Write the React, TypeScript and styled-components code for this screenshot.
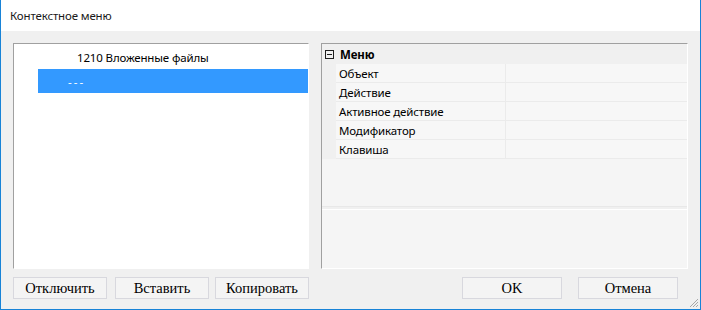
import React from "react";
import styled, { createGlobalStyle } from "styled-components";

const Global = createGlobalStyle`
  html, body { margin: 0; padding: 0; background: #f0f0f0; }
  * { box-sizing: border-box; }
`;

const Window = styled.div`
  width: 701px;
  height: 310px;
  display: flex;
  flex-direction: column;
  border: 1px solid #1883d7;
  border-top: none;
  background: #f0f0f0;
  position: relative;
  font-family: "Noto Sans", "Open Sans", sans-serif;
  font-size: 11.5px;
  letter-spacing: -0.15px;
  color: #000;
`;

const TitleBar = styled.div`
  height: 31px;
  background: #fff;
  display: flex;
  align-items: center;
  padding-left: 9px;
  padding-bottom: 1px;
  color: #1a1a1a;
`;

const Body = styled.div`
  flex: 1;
  display: flex;
  flex-direction: column;
  padding: 12px 12px 0 12px;
`;

const Panels = styled.div`
  display: grid;
  grid-template-columns: 296px 367px;
  column-gap: 12px;
  height: 226px;
`;

const Sunken = styled.div`
  border-top: 1px solid #a0a0a0;
  border-left: 1px solid #a0a0a0;
  border-right: 1px solid #fff;
  border-bottom: 1px solid #fff;
`;

const Tree = styled(Sunken)`
  background: #fff;
  padding-top: 1px;
  display: flex;
  flex-direction: column;
`;

const TreeRow = styled.div<{ $indent: number; $text: number; $selected?: boolean }>`
  height: 24px;
  display: flex;
  align-items: center;
  margin-left: ${(p) => p.$indent}px;
  padding-left: ${(p) => p.$text}px;
  background: ${(p) => (p.$selected ? "#3399ff" : "transparent")};
  color: ${(p) => (p.$selected ? "#fff" : "#000")};
  letter-spacing: ${(p) => (p.$selected ? "2px" : "inherit")};
  white-space: nowrap;
`;

const PropGrid = styled(Sunken)`
  background: #f0f0f0;
  display: flex;
  flex-direction: column;
`;

const GridBody = styled.div`
  height: 163px;
  background: #f5f5f5;
  border-bottom: 1px solid #e8e8e8;
  display: flex;
  flex-direction: column;
`;

const CategoryRow = styled.div`
  height: 20px;
  display: flex;
  align-items: center;
  background: #f0f0f0;
  font-weight: 700;
  padding-left: 3px;
  gap: 6px;
`;

const Expander = styled.span`
  width: 9px;
  height: 9px;
  border: 1px solid #1e1e1e;
  position: relative;
  display: inline-block;
  &::after {
    content: "";
    position: absolute;
    left: 1px;
    right: 1px;
    top: 3px;
    height: 1px;
    background: #1e1e1e;
  }
`;

const PropRow = styled.div`
  height: 19px;
  display: grid;
  grid-template-columns: 14px 170px 1fr;
`;

const Margin = styled.div`
  background: #f0f0f0;
`;

const Cell = styled.div<{ $divider?: boolean }>`
  background: #f7f7f7;
  border-bottom: 1px solid #ebebeb;
  border-right: ${(p) => (p.$divider ? "1px solid #ebebeb" : "none")};
  display: flex;
  align-items: center;
  padding-left: 3px;
  white-space: nowrap;
`;

const DescPane = styled.div`
  margin-top: 2px;
  flex: 1;
  background: #f5f5f5;
  border-top: 1px solid #ffffff;
`;

const ButtonBar = styled.div`
  display: flex;
  margin-top: 8px;
  padding-right: 10px;
`;

const Button = styled.button<{ $w: number; $ml?: number }>`
  width: ${(p) => p.$w}px;
  height: 22px;
  margin-left: ${(p) => p.$ml ?? 0}px;
  background: #f4f4f4;
  border: 1px solid #d8d8de;
  font-family: "Liberation Serif", "Times New Roman", serif;
  font-size: 14.5px;
  color: #000;
  padding: 0;
  display: flex;
  align-items: center;
  justify-content: center;
`;

const Grip = styled.svg`
  position: absolute;
  right: 1px;
  bottom: 1px;
`;

const rows = ["Объект", "Действие", "Активное действие", "Модификатор", "Клавиша"];

export default function App() {
  return (
    <>
      <Global />
      <Window>
        <TitleBar>Контекстное меню</TitleBar>
        <Body>
          <Panels>
            <Tree>
              <TreeRow $indent={0} $text={63}>1210 Вложенные файлы</TreeRow>
              <TreeRow $indent={24} $text={30} $selected>---</TreeRow>
            </Tree>
            <PropGrid>
              <GridBody>
                <CategoryRow>
                  <Expander />
                  Меню
                </CategoryRow>
                {rows.map((r) => (
                  <PropRow key={r}>
                    <Margin />
                    <Cell $divider>{r}</Cell>
                    <Cell />
                  </PropRow>
                ))}
              </GridBody>
              <DescPane />
            </PropGrid>
          </Panels>
          <ButtonBar>
            <Button $w={94}>Отключить</Button>
            <Button $w={94} $ml={8}>Вставить</Button>
            <Button $w={94} $ml={6}>Копировать</Button>
            <Button $w={100} $ml={153}>OK</Button>
            <Button $w={100} $ml={16}>Отмена</Button>
          </ButtonBar>
        </Body>
        <Grip width="10" height="10" viewBox="0 0 10 10">
          <g stroke="#a8a8a8" strokeWidth="1">
            <line x1="9" y1="1" x2="1" y2="9" />
            <line x1="9" y1="4" x2="4" y2="9" />
            <line x1="9" y1="7" x2="7" y2="9" />
          </g>
        </Grip>
      </Window>
    </>
  );
}
